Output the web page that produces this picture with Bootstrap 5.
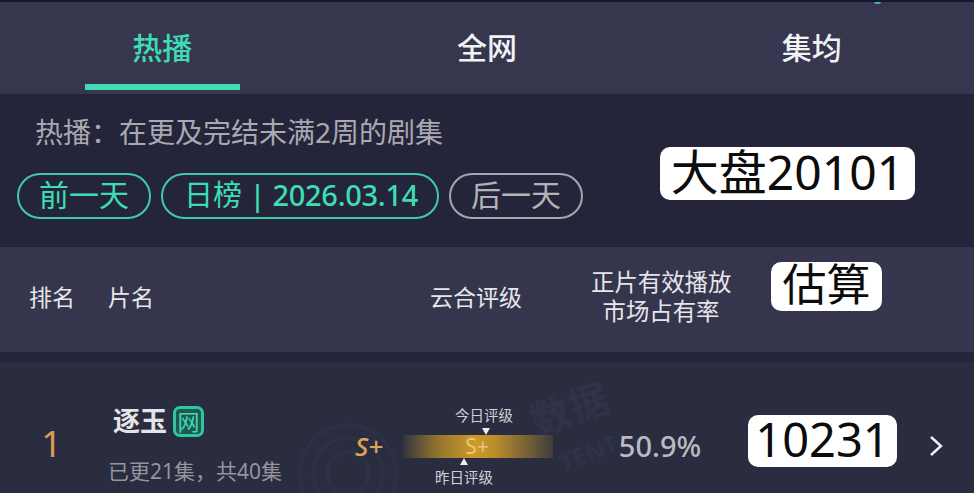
<!DOCTYPE html>
<html lang="zh">
<head>
<meta charset="utf-8">
<title>热播</title>
<link href="https://cdn.jsdelivr.net/npm/bootstrap@5.3.0/dist/css/bootstrap.min.css" rel="stylesheet">
<style>
html,body{height:493px;overflow:hidden;background:#2a2d3f;font-family:"Noto Sans","Noto Sans CJK SC",sans-serif;}
.app-frame{position:relative;width:974px;height:493px;overflow:hidden;border-top:2px solid #15172a;}
.top-dot{position:absolute;left:874px;top:-3px;width:7px;height:5px;border-radius:50%;background:#2fb7c4;}
.tab-bar{height:92px;background:#36374f;}
.tab-item{width:325px;height:92px;position:relative;font-size:30px;font-weight:500;color:#f2f2f4;padding-top:25px;line-height:42px;text-align:center;}
.tab-item.is-on{color:#3fdcb4;}
.tab-item.is-on::after{content:"";position:absolute;left:85px;width:155px;height:6px;top:82px;background:#3fdcb4;}
.notice-panel{position:relative;height:153px;background:#24253a;padding:20px 17px 0;}
.notice-text{font-size:28px;line-height:36px;color:#a9a9b3;padding-left:18px;white-space:nowrap;}
.date-pills{margin-top:23px;gap:10px;}
.date-pill{height:46px;border:2px solid #3fcba9;border-radius:23px;color:#3fdcb4;font-size:30px;line-height:40px;text-align:center;white-space:nowrap;}
.pill-short{width:134px;}
.pill-wide{width:278px;font-size:29px;padding-left:2px;}
.pill-digits{font-weight:500;letter-spacing:-.3px;}
.pill-muted{border-color:#a6a6ae;color:#b3b3ba;}
.sticker{position:absolute;background:#fff;color:#0c0c0c;border-radius:10px;font-size:47px;display:flex;align-items:center;justify-content:center;line-height:1;white-space:nowrap;padding-bottom:4px;}
.sticker-a{left:660px;top:53px;width:255px;height:53px;font-size:48px;}
.sticker-b{left:771px;top:15px;width:111px;height:49px;font-size:44px;padding-bottom:6px;}
.sticker-c{left:748px;top:53px;width:149px;height:52px;}
.head-row{position:relative;height:105px;background:#35364e;color:#e6e6ea;font-size:23px;padding-bottom:5px;}
.col-rank{width:108px;padding-left:29px;flex:none;}
.col-title{width:322px;flex:none;}
.col-rate{width:161px;flex:none;}
.col-share{width:140px;flex:none;text-align:center;line-height:29px;white-space:nowrap;font-size:23.4px;}
.shadow-gap{height:10px;background:#23253a;}
.data-row{position:relative;height:131px;background:#2a2d3f;padding-top:36px;}
.rank-num{font-size:36px;color:#dd9a54;width:45px;text-align:center;line-height:1;margin-top:-3px;}
.show-name{font-size:27px;font-weight:700;color:#e4e4e8;line-height:38px;margin-left:5px;}
.net-tag{width:31px;height:31px;border:3px solid #2fc6a0;border-radius:7px;background:#20584f;color:#3fdcb4;font-size:22px;line-height:24px;text-align:center;margin-left:6px;}
.show-sub{font-size:21px;color:#94959f;line-height:30px;margin-top:16px;white-space:nowrap;}
.col-name{width:244px;flex:none;padding-top:4px;}
.rate-letter{width:51px;flex:none;font-size:26px;font-style:italic;font-weight:500;color:#dca654;line-height:28px;padding-left:3px;position:relative;}
.rate-box{width:150px;flex:none;font-size:14.5px;color:#d0d0d6;text-align:center;line-height:20px;}
.rate-today{position:relative;margin-left:12px;}
.rate-yest{position:relative;margin-left:-28px;margin-top:9px;}
.rate-today::after{content:"";position:absolute;left:67px;bottom:-10px;border-left:4px solid transparent;border-right:4px solid transparent;border-top:7px solid #eee;}
.rate-yest::before{content:"";position:absolute;left:85px;top:-9px;border-left:4px solid transparent;border-right:4px solid transparent;border-bottom:7px solid #eee;}
.rate-bar{height:23px;margin-top:10px;background:linear-gradient(90deg,rgba(120,100,50,.12),#8f7230 22%,#cf9a28 48%,#b98c2c 62%,rgba(110,95,55,.3));color:#e9c77d;font-size:21px;line-height:23px;padding-right:2px;}
.col-pct{width:140px;margin-left:37px;flex:none;text-align:center;font-size:29px;font-weight:500;color:#b9bac2;line-height:1;}
.go-arrow{margin-left:199px;flex:none;}
.brand-mark{position:absolute;left:290px;top:0;width:360px;height:131px;pointer-events:none;}
.brand-ring{fill:none;stroke:#2e3145;stroke-width:4;}
.brand-text{font-family:"Noto Sans CJK SC",sans-serif;font-weight:700;font-size:40px;fill:#303347;}
.brand-latin{font-family:"Noto Sans",sans-serif;font-weight:700;font-size:24px;fill:#303347;}
</style>
</head>
<body>
<div class="app-frame">
  <div class="top-dot"></div>
  <div class="tab-bar d-flex">
    <div class="tab-item is-on">热播</div>
    <div class="tab-item">全网</div>
    <div class="tab-item">集均</div>
  </div>
  <div class="notice-panel">
    <div class="notice-text">热播&#xFF1A;在更及完结未满2周的剧集</div>
    <div class="date-pills d-flex">
      <div class="date-pill pill-short">前一天</div>
      <div class="date-pill pill-wide">日榜 <span class="pill-digits">| 2026.03.14</span></div>
      <div class="date-pill pill-short pill-muted">后一天</div>
    </div>
    <div class="sticker sticker-a">大盘20101</div>
  </div>
  <div class="head-row d-flex align-items-center">
    <div class="col-rank">排名</div>
    <div class="col-title">片名</div>
    <div class="col-rate">云合评级</div>
    <div class="col-share">正片有效播放<br>市场占有率</div>
    <div class="sticker sticker-b">估算</div>
  </div>
  <div class="shadow-gap"></div>
  <div class="data-row d-flex align-items-start">
    <svg class="brand-mark" viewBox="0 0 360 131" aria-hidden="true">
      <circle class="brand-ring" cx="58" cy="111" r="48"/><circle class="brand-ring" cx="58" cy="111" r="35"/><circle class="brand-ring" cx="58" cy="111" r="21"/>
      <text class="brand-text" transform="rotate(-20 280 48)" x="240" y="62">数据</text>
      <text class="brand-latin" transform="rotate(-20 300 90)" x="268" y="99">TENT</text>
    </svg>
    <div class="col-rank pt-0 align-self-center"><div class="rank-num">1</div></div>
    <div class="col-name position-relative">
      <div class="d-flex align-items-center"><span class="show-name">逐玉</span><span class="net-tag">网</span></div>
      <div class="show-sub">已更21集&#xFF0C;共40集</div>
    </div>
    <div class="rate-letter align-self-center">S+</div>
    <div class="rate-box align-self-center position-relative">
      <div class="rate-today">今日评级</div>
      <div class="rate-bar">S+</div>
      <div class="rate-yest">昨日评级</div>
    </div>
    <div class="col-pct align-self-center">50.9%</div>
    <svg class="go-arrow align-self-center" width="14" height="22" viewBox="0 0 14 22" aria-hidden="true"><path d="M2 2l10 9-10 9" fill="none" stroke="#f2f2f4" stroke-width="2.4"/></svg>
    <div class="sticker sticker-c">10231</div>
  </div>
</div>
<script src="https://cdn.jsdelivr.net/npm/bootstrap@5.3.0/dist/js/bootstrap.bundle.min.js"></script>
</body>
</html>
